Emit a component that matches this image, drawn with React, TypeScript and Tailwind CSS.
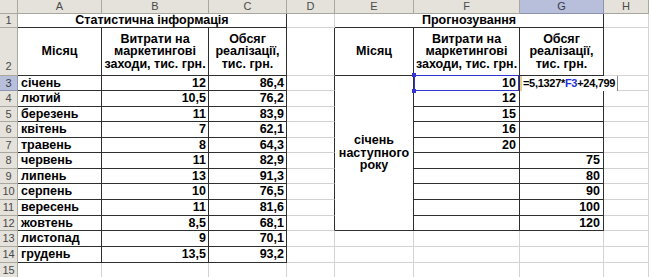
import { Fragment } from "react";

const HDR = "bg-[#e4e2da] border-r border-b border-[#a8a89f] text-[11px] text-[#4a4a4a] flex items-center justify-center";
const HDR_SEL = "bg-[#b7bfdb] border-r border-b border-[#8d94b2] text-[11px] text-[#3a3a4a] flex items-center justify-center";
const GRID = "border-r border-b border-[#d3d3d3]";
const BOX = "border-r border-b border-[#2f2f2f]";
const EDGE = "border-r border-b border-r-[#2f2f2f] border-b-[#d3d3d3]";
const TXT = "flex items-center text-[12.5px] font-bold text-black leading-none whitespace-nowrap";

const left: [string, string, string][] = [
  ["січень", "12", "86,4"],
  ["лютий", "10,5", "76,2"],
  ["березень", "11", "83,9"],
  ["квітень", "7", "62,1"],
  ["травень", "8", "64,3"],
  ["червень", "11", "82,9"],
  ["липень", "13", "91,3"],
  ["серпень", "10", "76,5"],
  ["вересень", "11", "81,6"],
  ["жовтень", "8,5", "68,1"],
  ["листопад", "9", "70,1"],
  ["грудень", "13,5", "93,2"],
];

const forecastF = ["10", "12", "15", "16", "20", "", "", "", "", ""];
const forecastG = ["", "", "", "", "", "75", "80", "90", "100", "120"];

const cols = ["A", "B", "C", "D", "E", "F", "G", "H"];

function RowHead({ n, sel }: { n: number; sel?: boolean }) {
  return <div className={sel ? HDR_SEL : HDR}>{n}</div>;
}

export default function App() {
  return (
    <div className="w-[649px] h-[277px] overflow-hidden bg-white font-['Liberation_Sans',Arial,sans-serif]">
      <div className="grid grid-cols-[18px_84px_107px_78px_48px_79px_106px_84px_45px] grid-rows-[14px_14px_48px_15px_16px_15px_16px_15px_16px_15px_16px_16px_15px_16px_16px_16px]">
        {/* column headers */}
        <div className={HDR} />
        {cols.map((c) => (
          <div key={c} className={c === "G" ? HDR_SEL : HDR}>
            {c}
          </div>
        ))}

        {/* row 1 */}
        <RowHead n={1} />
        <div className={`col-span-3 ${BOX} ${TXT} justify-center`}>Статистична інформація</div>
        <div className={GRID} />
        <div className={`col-span-3 ${BOX} ${TXT} justify-center`}>Прогнозування</div>
        <div className={GRID} />

        {/* row 2 */}
        <div className={`${HDR} !items-end pb-px`}>2</div>
        <div className={`${BOX} ${TXT} justify-center`}>Місяц</div>
        <div className={`${BOX} ${TXT} justify-center text-center leading-[16px]`}>
          Витрати на
          <br />
          маркетингові
          <br />
          заходи, тис. грн.
        </div>
        <div className={`${BOX} ${TXT} justify-center text-center leading-[16px]`}>
          Обсяг
          <br />
          реалізації,
          <br />
          тис. грн.
        </div>
        <div className={EDGE} />
        <div className={`${BOX} ${TXT} justify-center`}>Місяц</div>
        <div className={`${BOX} ${TXT} justify-center text-center leading-[16px]`}>
          Витрати на
          <br />
          маркетингові
          <br />
          заходи, тис. грн.
        </div>
        <div className={`${BOX} ${TXT} justify-center text-center leading-[16px]`}>
          Обсяг
          <br />
          реалізації,
          <br />
          тис. грн.
        </div>
        <div className={GRID} />

        {/* rows 3 - 14 */}
        {left.map((r, i) => (
          <Fragment key={r[0]}>
            <RowHead n={i + 3} sel={i === 0} />
            <div className={`${BOX} ${TXT} justify-start pl-[3px]`}>{r[0]}</div>
            <div className={`${BOX} ${TXT} justify-end pr-[2px]`}>{r[1]}</div>
            <div className={`${BOX} ${TXT} justify-end pr-[2px]`}>{r[2]}</div>
            <div className={i < 10 ? EDGE : GRID} />
            {i === 0 && (
              <div className={`row-span-10 ${BOX} ${TXT} justify-center text-center leading-[16px]`}>
                січень
                <br />
                наступного
                <br />
                року
              </div>
            )}
            {i >= 10 && <div className={GRID} />}
            {i === 0 ? (
              <div className={`relative ${BOX} ${TXT} justify-end pr-[3px]`}>
                {forecastF[i]}
                <div className="absolute left-0 right-0 top-[-1px] bottom-[-1px] border border-[#3535d0]" />
                <div className="absolute left-[-2px] top-[-3px] w-[4px] h-[4px] bg-[#3535d0]" />
                <div className="absolute left-[-2px] bottom-[-3px] w-[4px] h-[4px] bg-[#3535d0]" />
              </div>
            ) : (
              <div className={`${i < 10 ? BOX : GRID} ${TXT} justify-end pr-[3px]`}>{i < 10 ? forecastF[i] : ""}</div>
            )}
            {i === 0 ? (
              <div className={`relative ${BOX}`}>
                <div className="absolute z-10 left-0 top-0 bottom-[-1px] min-w-[85px] pr-[2px] flex items-center bg-white border-l-2 border-[#e2d48c] border-r border-r-[#8a8a8a] pl-[1px] text-[11px] font-bold text-black whitespace-nowrap tracking-[-0.3px]">
                  =5,1327*<span className="text-[#1f2fd6]">F3</span>+24,799
                </div>
              </div>
            ) : (
              <div className={`${i < 10 ? BOX : GRID} ${TXT} justify-end pr-[3px]`}>{i < 10 ? forecastG[i] : ""}</div>
            )}
            <div className={GRID} />
          </Fragment>
        ))}

        {/* row 15 */}
        <RowHead n={15} />
        {cols.map((c) => (
          <div key={c} className={GRID} />
        ))}
      </div>
    </div>
  );
}
